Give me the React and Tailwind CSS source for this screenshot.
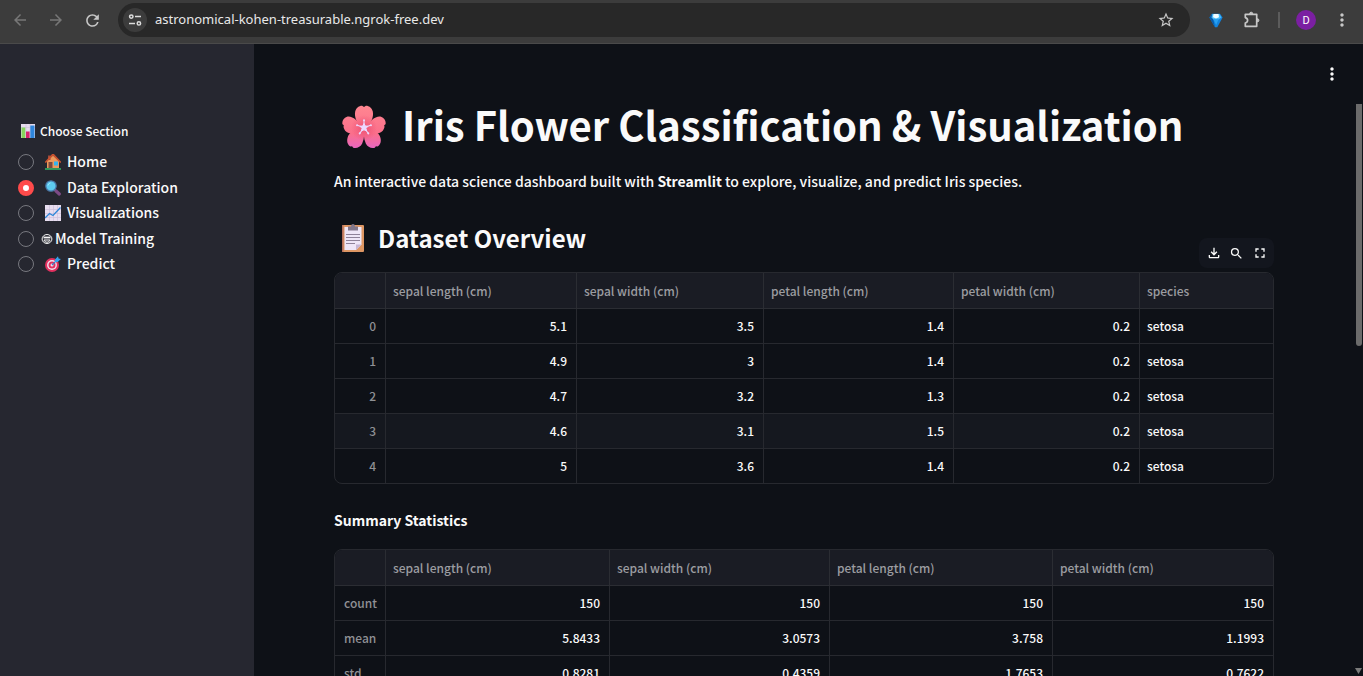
import React from 'react';
import { MdArrowBack, MdArrowForward, MdRefresh, MdMoreVert, MdStarBorder, MdSearch, MdFullscreen } from 'react-icons/md';

const overview = {
  label: 'Dataset Overview',
  cols: ['w-[51px]', 'w-[191px]', 'w-[187px]', 'w-[190px]', 'w-[186px]', 'w-auto'],
  head: ['', 'sepal length (cm)', 'sepal width (cm)', 'petal length (cm)', 'petal width (cm)', 'species'],
  indexAlign: 'text-right',
  rows: [
    ['0', '5.1', '3.5', '1.4', '0.2', 'setosa'],
    ['1', '4.9', '3', '1.4', '0.2', 'setosa'],
    ['2', '4.7', '3.2', '1.3', '0.2', 'setosa'],
    ['3', '4.6', '3.1', '1.5', '0.2', 'setosa'],
    ['4', '5', '3.6', '1.4', '0.2', 'setosa'],
  ],
};

const summary = {
  label: 'Summary Statistics',
  cols: ['w-[51px]', 'w-[224px]', 'w-[220px]', 'w-[223px]', 'w-auto'],
  head: ['', 'sepal length (cm)', 'sepal width (cm)', 'petal length (cm)', 'petal width (cm)'],
  indexAlign: 'text-left',
  rows: [
    ['count', '150', '150', '150', '150'],
    ['mean', '5.8433', '3.0573', '3.758', '1.1993'],
    ['std', '0.8281', '0.4359', '1.7653', '0.7622'],
  ],
};

function TuneIcon() {
  return (
    <svg viewBox="0 0 14 14" className="size-3.5" fill="none" stroke="#dcdcdc" strokeWidth="1.5" aria-hidden="true">
      <circle cx="3.3" cy="3.6" r="1.7" />
      <path d="M7 3.6h6M1 10.4h6" />
      <circle cx="10.9" cy="10.4" r="1.7" />
    </svg>
  );
}

function GemIcon() {
  return (
    <svg viewBox="0 0 14 15" className="h-[15px] w-3.5" aria-hidden="true">
      <path d="M3 .8h8l2.600 3.700L8.300 14.200H6L.4 4.500z" fill="#1283dd" />
      <path d="M3 .8L.4 4.500L6 14.200L4 5.500z" fill="#0a5aa8" />
      <path d="M3.500 1h7L12.500 4.500L9.500 6.500h-5L2.500 4.500z" fill="#4dbcf7" />
      <path d="M4.500 1h5L10 4.200L7 5.500L4 4.200z" fill="#f2fcff" />
      <path d="M4.500 6.500h5L7.200 12z" fill="#27a0f2" />
    </svg>
  );
}

function PuzzleIcon() {
  return (
    <svg viewBox="0 0 20 20" className="size-5" fill="none" stroke="#c7c7c7" strokeWidth="1.7" strokeLinejoin="round" aria-hidden="true">
      <path d="M3.300 4.300H14.700V16.300H3.300V13c1.500-.4 2.300-1.400 2.300-2.700S4.800 8 3.300 7.600z" />
      <path d="M7.600 3.800a1.600 1.600 0 0 1 3.200 0zM15.300 8.700a1.600 1.600 0 0 1 0 3.200z" fill="#c7c7c7" strokeWidth="1" />
    </svg>
  );
}

function DownloadIcon() {
  return (
    <svg viewBox="0 -960 960 960" className="size-4" fill="currentColor" aria-hidden="true">
      <path d="M480-320 280-520l56-58 104 104v-326h80v326l104-104 56 58-200 200ZM240-160q-33 0-56.500-23.500T160-240v-120h80v120h480v-120h80v120q0 33-23.500 56.500T720-160H240Z" />
    </svg>
  );
}

function BlossomEmoji() {
  const turns = [0, 72, 144, 216, 288];
  return (
    <svg viewBox="0 0 44 44" className="size-11 shrink-0" role="img" aria-label="Cherry blossom">
      <defs>
        <linearGradient id="petal" gradientUnits="userSpaceOnUse" x1="22" y1="0" x2="22" y2="44">
          <stop offset="0" stopColor="#ff8791" />
          <stop offset="0.65" stopColor="#fb6f8b" />
          <stop offset="1" stopColor="#e766c4" />
        </linearGradient>
        <radialGradient id="heart" gradientUnits="userSpaceOnUse" cx="22" cy="23" r="13">
          <stop offset="0" stopColor="#e8476c" stopOpacity="0.75" />
          <stop offset="1" stopColor="#e8476c" stopOpacity="0" />
        </radialGradient>
      </defs>
      <g fill="url(#petal)">
        <path d="M22 24C15 19 12 12 13.200 6.500C14.200 2.500 18 .4 20.500 .9L22 2L23.500 .9C26 .4 29.800 2.500 30.800 6.500C32 12 29 19 22 24z" />
        <path d="M22 24C17 16.500 10 10.500 5 11.800C1.500 12.700-.3 16.500 .5 19.300L1.800 20.200L1.500 22C2.400 26 5.500 28.700 9.500 28.300C14 28 19 26 22 24z" />
        <path d="M22 24C27 16.500 34 10.500 39 11.800C42.500 12.700 44.300 16.500 43.500 19.300L42.200 20.200L42.500 22C41.600 26 38.500 28.700 34.500 28.300C30 28 25 26 22 24z" />
        <path d="M22 21C13 22.500 6.500 28 5.500 33C4.500 37 6 40.300 8.500 41.600L10.100 41.200L11.200 42.700C14.500 43.800 18.500 42 20.200 38.500C22.500 33.500 22.500 27 22 21z" />
        <path d="M22 21C31 22.500 37.500 28 38.500 33C39.500 37 38 40.300 35.500 41.600L33.900 41.200L32.800 42.700C29.500 43.800 25.500 42 23.800 38.500C21.500 33.500 21.500 27 22 21z" />
      </g>
      <circle cx="22" cy="23" r="13" fill="url(#heart)" />
      <g fill="#ecd8ff" stroke="#ecd8ff">
        {turns.map((t) => (
          <g key={t} transform={`rotate(${t} 22 22.5)`}>
            <path d="M22 20V15.500" strokeWidth="1.100" />
            <circle cx="22" cy="15.200" r="1" stroke="none" />
          </g>
        ))}
        <path d="M22 18.500L23.300 21L26 21.300L24 23.300L24.600 26L22 24.800L19.400 26L20 23.300L18 21.300L20.700 21z" strokeWidth="1" strokeLinejoin="round" />
      </g>
    </svg>
  );
}

function ClipboardEmoji() {
  return (
    <svg viewBox="0 0 22 28" className="h-7 w-[22px] shrink-0" role="img" aria-label="Clipboard">
      <rect x="0" y="1" width="22" height="27" rx="1" fill="#dd9663" />
      <rect x="0" y="1" width="1.500" height="27" fill="#b46f5c" />
      <path d="M2.500 3h17v17.500L14 26H2.500z" fill="#eee6f7" />
      <path d="M14 26v-5.500h5.500z" fill="#c6b6d6" />
      <path d="M6 2.500h3C9 .8 10 0 11 0s2 .8 2 2.500h3v4H6z" fill="#82778b" />
      <path d="M4 10.500h14M4 13.500h14M4 16.500h14M4 19.500h9" stroke="#8e8299" strokeWidth="1" />
    </svg>
  );
}

function BarsEmoji() {
  return (
    <svg viewBox="0 0 14 14" className="size-3.5 shrink-0" role="img" aria-label="Bar chart">
      <rect width="14" height="14" fill="#e6dcee" />
      <path d="M0 3.500h14M5 0v14M9 0v14" stroke="#cdbfda" strokeWidth=".6" />
      <rect x=".5" y="3.500" width="3.800" height="10.500" fill="#86d65c" />
      <rect x="5" y="7.500" width="3.600" height="6.500" fill="#d6246e" />
      <rect x="9.300" y="1.500" width="4.200" height="12.500" fill="#2f86dc" />
    </svg>
  );
}

function HomeEmoji() {
  return (
    <svg viewBox="0 0 16 16" className="size-4 shrink-0" role="img" aria-label="House">
      <path d="M2 7L8 1.500L14 7v7H2z" fill="#eb9a5c" />
      <path d="M3 1.500h2.500V6H3z" fill="#a04a3c" />
      <path d="M.8 8L7.500 .8h1L15.300 8" fill="none" stroke="#c8512f" strokeWidth="1.700" strokeLinecap="round" />
      <rect x="3.500" y="8" width="4" height="6.500" fill="#7c4a3f" />
      <rect x="9" y="7.500" width="4" height="4" fill="#35b3ee" />
      <rect y="14.300" width="16" height="1.400" fill="#35c46b" />
    </svg>
  );
}

function LensEmoji() {
  return (
    <svg viewBox="0 0 16 16" className="size-4 shrink-0" role="img" aria-label="Magnifying glass">
      <path d="M9.500 9.500L11 11" stroke="#8d82a0" strokeWidth="2" />
      <path d="M11 11L14.300 14" stroke="#7d4a86" strokeWidth="3.200" strokeLinecap="round" />
      <circle cx="6" cy="6" r="5.200" fill="#5dcbf0" stroke="#4b76a6" strokeWidth="1.300" />
      <path d="M3 5.500a3.200 3.200 0 0 1 2.500-2.600" stroke="#9be6fb" strokeWidth="1" fill="none" />
    </svg>
  );
}

function TrendEmoji() {
  return (
    <svg viewBox="0 0 16 16" className="size-4 shrink-0" role="img" aria-label="Rising chart">
      <rect width="16" height="16" fill="#e8def0" />
      <path d="M0 4.500h16M0 8.500h16M0 12.500h16M4.500 0v16M8.500 0v16M12.500 0v16" stroke="#cfc2dc" strokeWidth=".7" />
      <path d="M0 13L4.500 8.500L8 10.500L15.500 2.500" fill="none" stroke="#2c86d8" strokeWidth="1.300" />
    </svg>
  );
}

function FaceGlyph() {
  return (
    <svg viewBox="0 0 12 12" className="size-3 shrink-0" fill="none" stroke="#f5f5f5" role="img" aria-label="Robot">
      <ellipse cx="6" cy="6" rx="4.900" ry="4.500" strokeWidth="1" />
      <path d="M2.500 4.500h7" strokeWidth="1.800" />
      <path d="M3 7h6c-.4 1.500-1.500 2.200-3 2.200S3.400 8.500 3 7z" strokeWidth="1" />
    </svg>
  );
}

function TargetEmoji() {
  return (
    <svg viewBox="0 0 16 16" className="size-4 shrink-0" role="img" aria-label="Target">
      <circle cx="7" cy="9" r="7" fill="#e2305f" />
      <circle cx="7" cy="9" r="4.900" fill="#f1e3f2" />
      <circle cx="7" cy="9" r="3.500" fill="#e2305f" />
      <circle cx="7" cy="9" r="1.500" fill="#f1e3f2" />
      <path d="M7 9L12.500 3.500" stroke="#3d7fc4" strokeWidth="1.200" />
      <path d="M10 3.500L13 .2L13.600 2.400L15.900 3L12.700 6L10 6z" fill="#35a2ee" />
    </svg>
  );
}

function DataTable({ data, highlight }) {
  return (
    <div className="overflow-hidden rounded-lg border border-[#27292f]">
      <table aria-label={data.label} className="-mb-px w-full table-fixed border-separate border-spacing-0 text-xs font-medium">
        <colgroup>
          {data.cols.map((c, i) => <col key={i} className={c} />)}
        </colgroup>
        <thead>
          <tr className="h-9 bg-[#1a1c24] text-left text-[#9c9da1]">
            {data.head.map((h, i) => (
              <th key={i} scope="col" className="border-r border-b border-[#2b2d33] px-[7px] py-0 font-medium last:border-r-0">{h}</th>
            ))}
          </tr>
        </thead>
        <tbody>
          {data.rows.map((r, ri) => (
            <tr key={ri} className={ri === highlight ? 'h-[35px] bg-[#15181f]' : 'h-[35px]'}>
              {r.map((v, i) => {
                if (i === 0) {
                  return <th key={i} scope="row" className={`border-r border-b border-[#27292f] px-[9px] py-0 font-medium text-[#8f9094] ${data.indexAlign}`}>{v}</th>;
                }
                const align = v === 'setosa' ? 'px-[7px] text-left' : 'px-[9px] text-right';
                return <td key={i} className={`border-r border-b border-[#27292f] py-0 text-[#fafafa] last:border-r-0 ${align}`}>{v}</td>;
              })}
            </tr>
          ))}
        </tbody>
      </table>
    </div>
  );
}

function BarButton({ label, className = 'text-[#c7c7c7]', children }) {
  return (
    <button type="button" aria-label={label} className={`flex h-9 w-9 shrink-0 items-center justify-center ${className}`}>
      {children}
    </button>
  );
}

function BrowserBar() {
  return (
    <header className="flex h-11 shrink-0 items-center border-b border-[#4a4a4a] bg-[#3c3c3c] pr-[3px] pb-[3px] pl-0.5">
      <BarButton label="Back" className="text-[#777777]"><MdArrowBack size={18} /></BarButton>
      <BarButton label="Forward" className="text-[#777777]"><MdArrowForward size={18} /></BarButton>
      <BarButton label="Reload"><MdRefresh size={19} /></BarButton>
      <div className="mr-2 ml-2 flex h-[34px] flex-1 items-center gap-2 rounded-full bg-[#282828] pl-[5px]">
        <button type="button" aria-label="Site information" className="flex size-6 items-center justify-center rounded-full bg-[#3c3c3c]">
          <TuneIcon />
        </button>
        <input
          type="text"
          aria-label="Address"
          defaultValue="astronomical-kohen-treasurable.ngrok-free.dev"
          className="min-w-0 flex-1 bg-transparent font-['Noto_Sans',sans-serif] text-[13px] text-[#e8e8e8] outline-none"
        />
        <button type="button" aria-label="Bookmark" className="mr-[15px] text-[#c7c7c7]"><MdStarBorder size={18} /></button>
      </div>
      <BarButton label="Gem extension"><GemIcon /></BarButton>
      <BarButton label="Extensions"><PuzzleIcon /></BarButton>
      <span className="mx-2 h-4 w-0.5 bg-[#5c5c5c]" />
      <BarButton label="Profile" className="text-white">
        <span className="flex size-5 items-center justify-center rounded-full bg-[#7b1fa2] font-[Roboto,sans-serif] text-[11px] leading-none">D</span>
      </BarButton>
      <BarButton label="Browser menu"><MdMoreVert size={20} /></BarButton>
    </header>
  );
}

const sections = [
  { id: 'home', name: 'Home', icon: <HomeEmoji /> },
  { id: 'explore', name: 'Data Exploration', icon: <LensEmoji /> },
  { id: 'visual', name: 'Visualizations', icon: <TrendEmoji /> },
  { id: 'model', name: 'Model Training', icon: <FaceGlyph />, compact: true },
  { id: 'predict', name: 'Predict', icon: <TargetEmoji /> },
];

function Sidebar() {
  return (
    <aside className="w-[254px] shrink-0 bg-[#262730] pt-[77px] pr-4 pl-[18px] font-medium">
      <fieldset>
        <legend className="flex items-center gap-[5px] pl-[3px] text-xs leading-5">
          <BarsEmoji />
          Choose Section
        </legend>
        <div className="mt-[9px] flex h-[126px] flex-col justify-between text-sm leading-[22px]">
          {sections.map((s) => (
            <label key={s.id} className="flex h-6 items-center">
              <input
                type="radio"
                name="section"
                defaultChecked={s.id === 'explore'}
                className="size-4 shrink-0 appearance-none rounded-full border border-[#77787f] checked:border-5 checked:border-[#ff4b4b] checked:bg-white"
              />
              <span className={s.compact ? 'flex h-6 items-center gap-0.5 pl-[7px]' : 'flex h-6 items-center gap-1.5 pl-[11px]'}>
                {s.icon}
                <span className="h-6">{s.name}</span>
              </span>
            </label>
          ))}
        </div>
      </fieldset>
    </aside>
  );
}

function TableToolbar() {
  return (
    <div className="absolute right-0 bottom-full mb-1 flex h-[30px] items-center rounded-lg bg-[#13161e] px-[3px]">
      <button type="button" aria-label="Download" className="flex w-[23px] justify-center"><DownloadIcon /></button>
      <button type="button" aria-label="Search" className="flex w-[23px] justify-center"><MdSearch size={15} /></button>
      <button type="button" aria-label="Fullscreen" className="flex w-[23px] justify-center"><MdFullscreen size={16} /></button>
    </div>
  );
}

export default function App() {
  return (
    <div className="flex h-screen flex-col overflow-hidden bg-[#0e1117] font-['Noto_Sans_CJK_SC',sans-serif] text-[#fafafa]">
      <BrowserBar />
      <div className="flex min-h-0 flex-1">
        <Sidebar />
        <div className="flex min-w-0 flex-1 flex-col">
          <div className="flex h-11 shrink-0 justify-end pt-5 pr-[21px]">
            <button type="button" aria-label="Main menu" className="h-5"><MdMoreVert size={20} /></button>
          </div>
          <div className="flex min-h-0 flex-1">
            <main className="min-w-0 flex-1 overflow-hidden px-20 pt-[11px]">
              <h1 className="flex items-center gap-4 pl-2 text-[40px] leading-[48px] font-bold">
                <span className="pt-1.5"><BlossomEmoji /></span>
                Iris Flower Classification &amp; Visualization
              </h1>
              <p className="mt-5 text-sm leading-6 font-medium">
                An interactive data science dashboard built with <b>Streamlit</b> to explore, visualize, and predict Iris species.
              </p>
              <h2 className="mt-[29px] flex items-center gap-3.5 pl-2 text-2xl leading-8 font-bold">
                <ClipboardEmoji />
                Dataset Overview
              </h2>
              <div className="relative mt-[18px]">
                <TableToolbar />
                <DataTable data={overview} highlight={3} />
              </div>
              <p className="mt-6 mb-[17px] text-sm leading-6 font-bold">Summary Statistics</p>
              <DataTable data={summary} />
            </main>
            <div className="flex w-[9px] shrink-0 flex-col items-center justify-between pt-4 pb-0.5" aria-hidden="true">
              <span className="h-[242px] w-1.5 rounded-b-full bg-[#6b6b6b]" />
              <svg viewBox="0 0 7 6" className="h-1.5 w-[7px]" fill="#7a7a7a"><path d="M0 0h7L3.500 6z" /></svg>
            </div>
          </div>
        </div>
      </div>
    </div>
  );
}
